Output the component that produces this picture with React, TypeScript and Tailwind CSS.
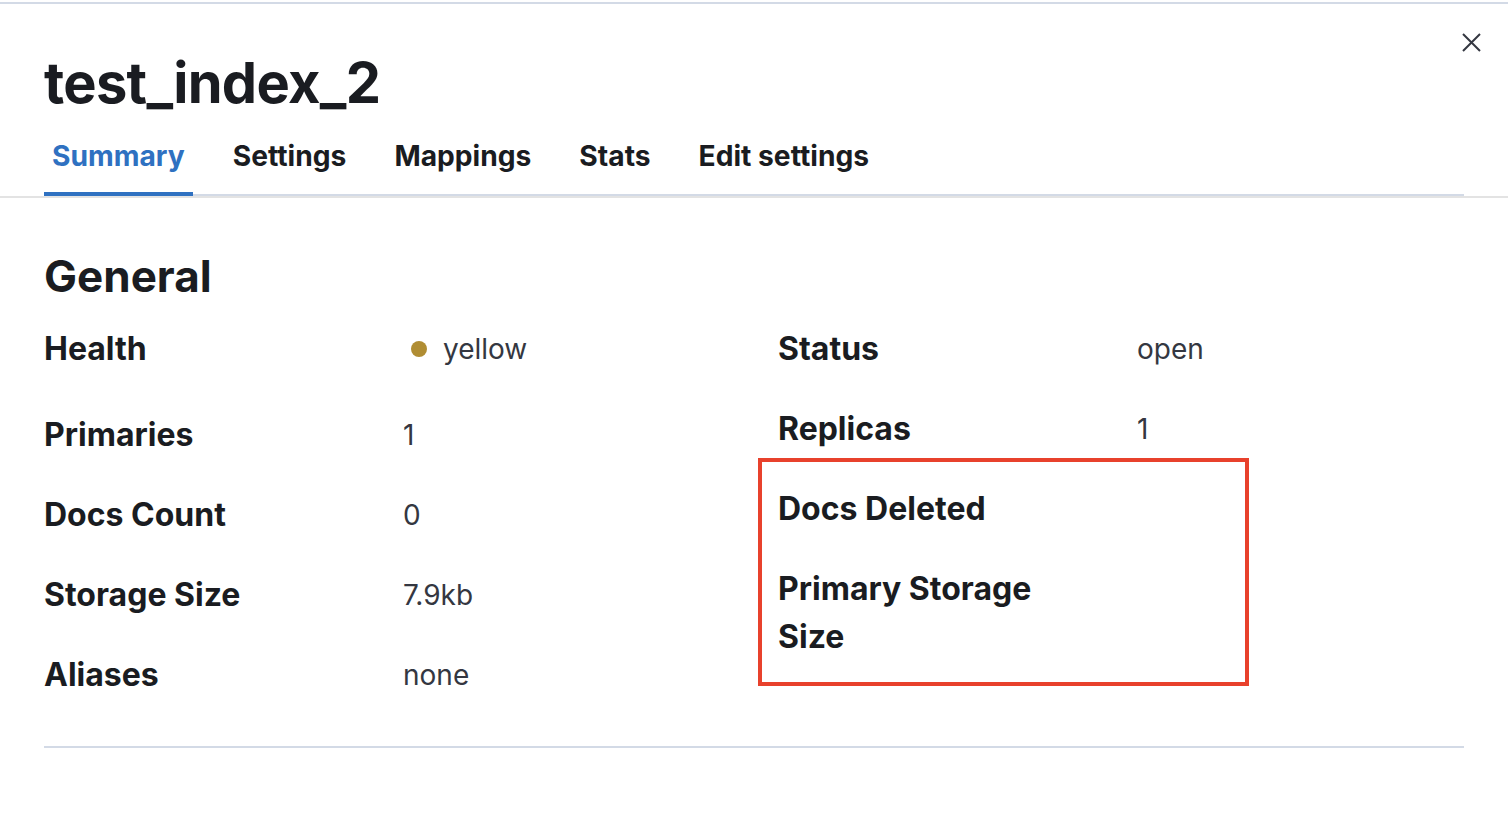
import React from "react";

type Row = { label: string; value?: React.ReactNode; tall?: boolean };

const LEFT: Row[] = [
  {
    label: "Health",
    tall: true,
    value: (
      <span className="flex items-center gap-[16px]">
        <span className="ml-[8px] h-[16px] w-[16px] rounded-full bg-[#b08d33]" />
        <span>yellow</span>
      </span>
    ),
  },
  { label: "Primaries", value: "1" },
  { label: "Docs Count", value: "0" },
  { label: "Storage Size", value: "7.9kb" },
  { label: "Aliases", value: "none" },
];

const RIGHT: Row[] = [
  { label: "Status", value: "open" },
  { label: "Replicas", value: "1" },
  { label: "Docs Deleted" },
  { label: "Primary Storage Size" },
];

const TABS = ["Summary", "Settings", "Mappings", "Stats", "Edit settings"];

function DescList({ rows, children }: { rows: Row[]; children?: React.ReactNode }) {
  return (
    <dl className="relative flex flex-col gap-[32px]">
      {rows.map((r) => (
        <div key={r.label} className={`grid grid-cols-[359px_1fr] ${r.tall ? "h-[54px]" : ""}`}>
          <dt className="max-w-[290px] text-[32px] leading-[48px] font-bold text-[#1a1c21]">{r.label}</dt>
          <dd className="flex h-[48px] items-center text-[28px] leading-[48px] text-[#343741]">{r.value}</dd>
        </div>
      ))}
      {children}
    </dl>
  );
}

export default function App() {
  return (
    <div className="relative h-[840px] w-[1508px] overflow-hidden bg-white font-['Inter',sans-serif]">
      <div className="mt-[2px] h-[2px] bg-[#d3dae6]" />

      <button aria-label="Close" className="absolute left-[1462px] top-[33px] text-[#343741]">
        <svg width="19" height="19" viewBox="0 0 19 19" fill="none" stroke="currentColor" strokeWidth="2">
          <path d="M1 1l17 17M18 1L1 18" />
        </svg>
      </button>

      <header className="border-b-2 border-[#e3e3e3]">
        <div className="px-[44px] pt-[47px]">
          <h1 className="text-[56px] leading-[64px] font-bold tracking-[-0.7px] text-[#1a1c21]">test_index_2</h1>
          <nav className="mt-[1px] flex gap-[32px] border-b-2 border-[#d3dae6]">
            {TABS.map((t, i) => (
              <button
                key={t}
                className={`relative flex h-[78px] items-center px-[8px] pt-[2px] text-[28.2px] font-bold ${
                  i === 0 ? "text-[#2f71c1]" : "text-[#1a1c21]"
                }`}
              >
                {t}
                {i === 0 && <span className="absolute bottom-[-2px] left-0 right-0 h-[4px] bg-[#2f71c1]" />}
              </button>
            ))}
          </nav>
        </div>
      </header>

      <main className="px-[44px] pt-[50px]">
        <h2 className="text-[44px] leading-[56px] font-bold text-[#1a1c21]">General</h2>
        <div className="mt-[21px] grid grid-cols-2 gap-x-[48px]">
          <DescList rows={LEFT} />
          <DescList rows={RIGHT}>
            <div className="pointer-events-none absolute left-[-20px] top-[133px] h-[228px] w-[491px] border-4 border-[#e8412c]" />
          </DescList>
        </div>
        <hr className="mt-[47px] border-t-2 border-[#d3dae6]" />
      </main>
    </div>
  );
}
